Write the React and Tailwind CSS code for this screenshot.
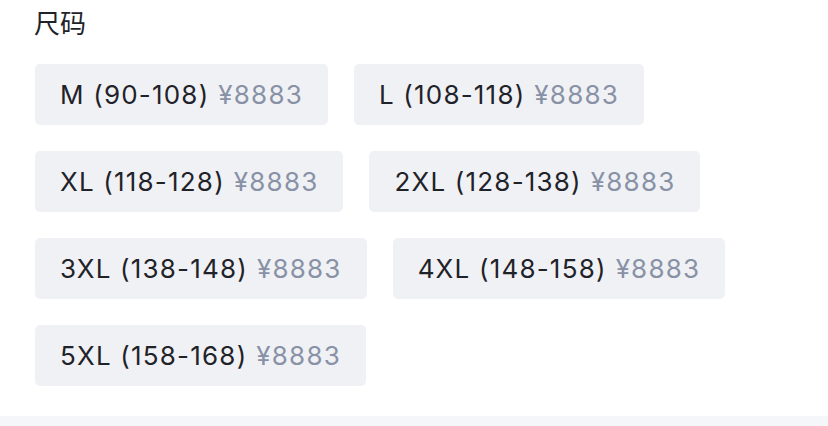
import React from 'react';

const sizes = [
  { label: 'M (90-108)', price: '¥8883' },
  { label: 'L (108-118)', price: '¥8883' },
  { label: 'XL (118-128)', price: '¥8883' },
  { label: '2XL (128-138)', price: '¥8883' },
  { label: '3XL (138-148)', price: '¥8883' },
  { label: '4XL (148-158)', price: '¥8883' },
  { label: '5XL (158-168)', price: '¥8883' },
];

const App = () => {
  return (
    <div className="w-[828px] h-[426px] bg-white flex flex-col font-['Inter','Noto_Sans_CJK_SC',sans-serif]">
      <div className="flex-1 px-[35px] pt-[8px]">
        <div className="-ml-[1px] text-[26px] leading-[32px] text-[#1f2329]">尺码</div>
        <div className="mt-[24px] flex flex-wrap gap-x-[26px] gap-y-[26px] pr-[60px]">
          {sizes.map((s, i) => (
            <div
              key={i}
              className="h-[61px] px-[25px] flex items-center rounded-[5px] bg-[#f0f1f5] text-[26px] tracking-[1.2px] text-[#1f2329] whitespace-nowrap"
            >
              <span>{s.label}</span>
              <span className="ml-[9px] text-[#8891a5]">{s.price}</span>
            </div>
          ))}
        </div>
      </div>
      <div className="h-[10px] bg-[#f5f6f9]" />
    </div>
  );
};

export default App;
